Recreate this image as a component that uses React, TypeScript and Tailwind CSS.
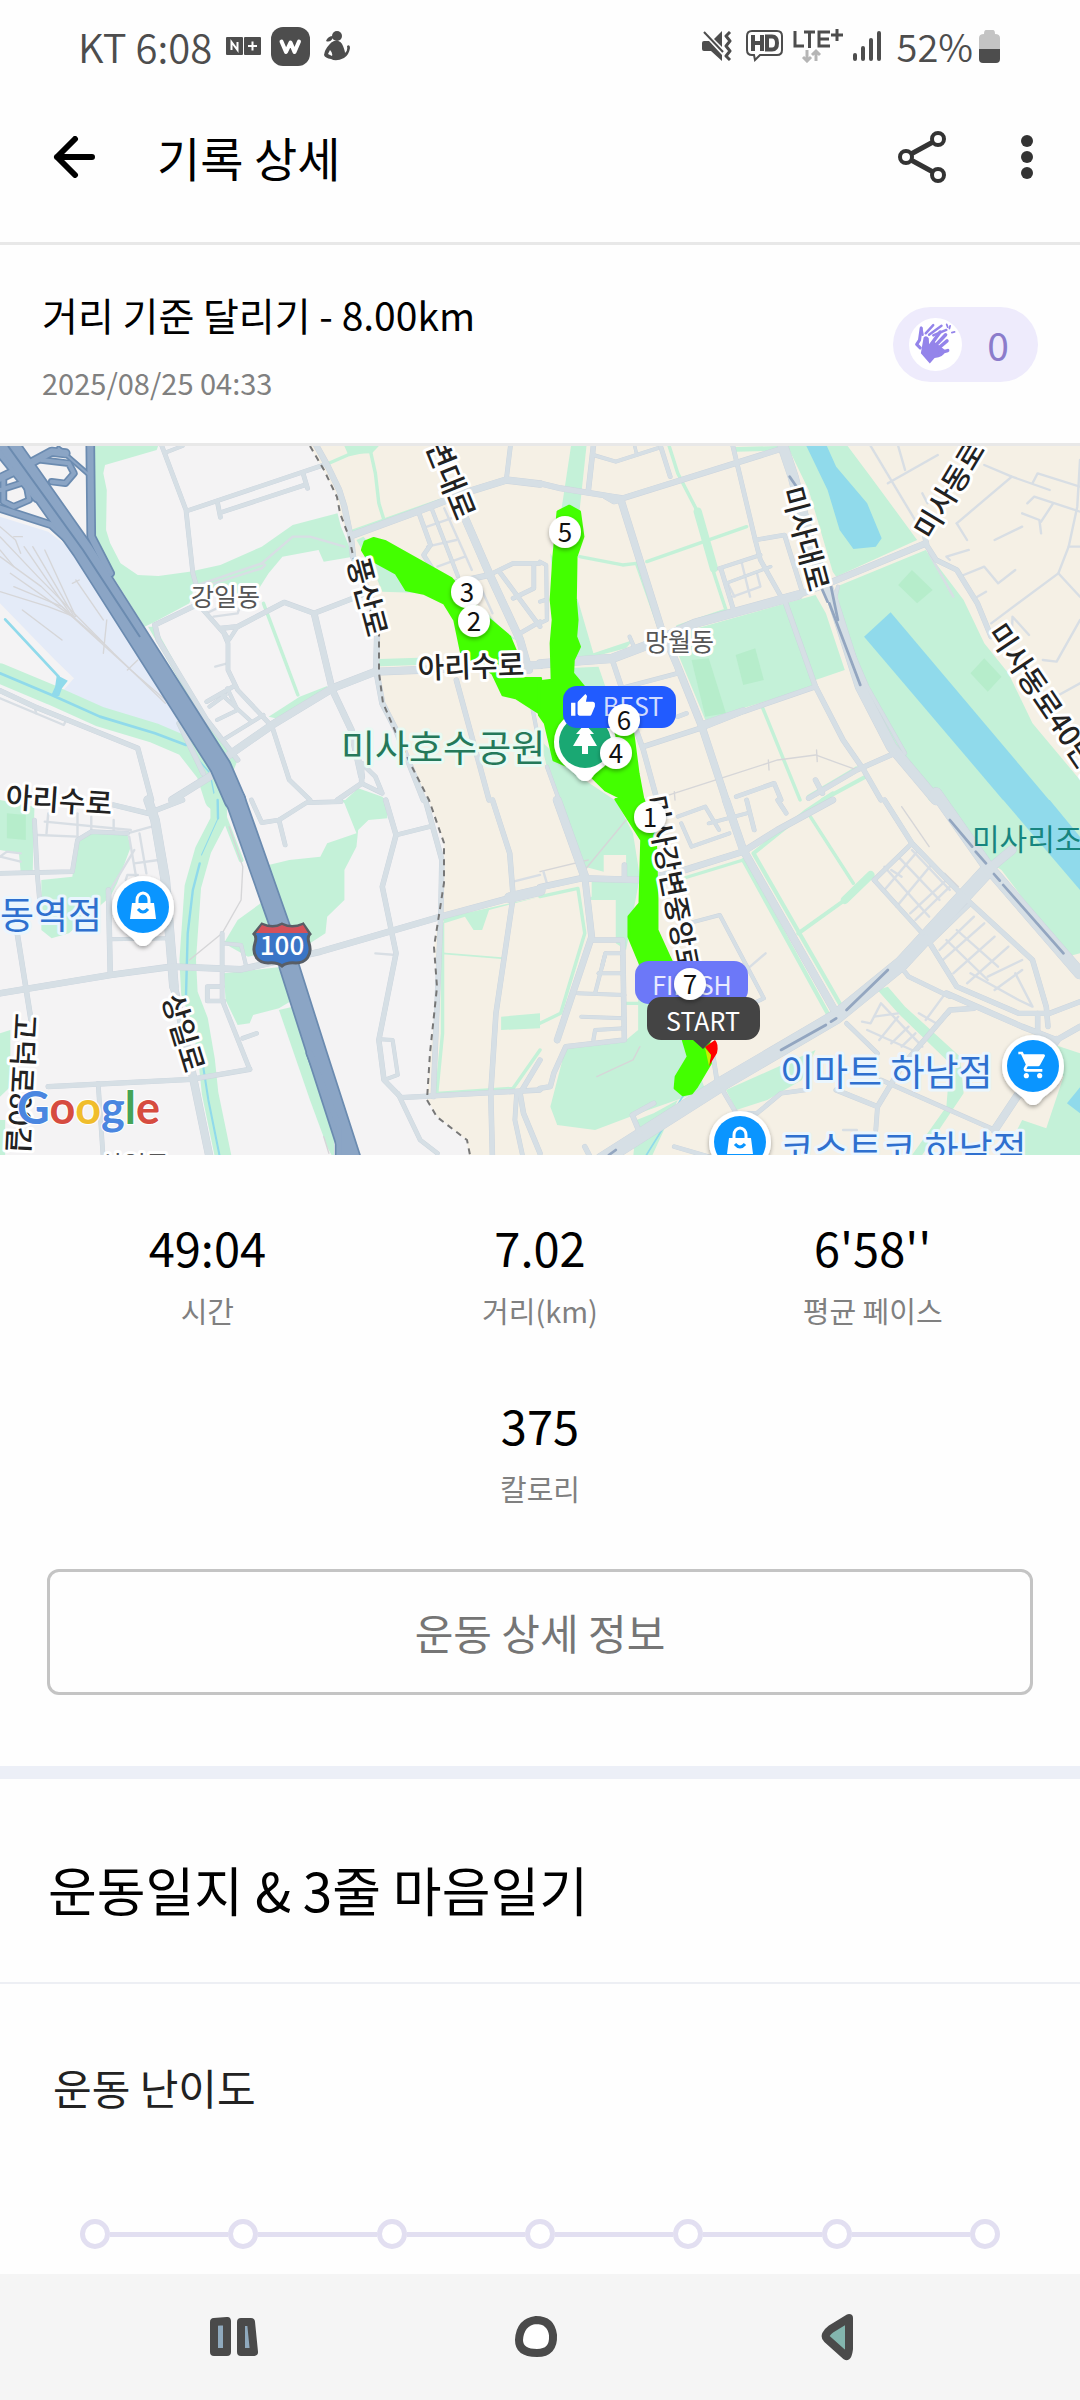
import React, { useState } from "react";
import { MdShoppingCart, MdThumbUp } from "react-icons/md";

type Road = [width: number, d: string];

interface Tile {
  x: number;
  y: number;
  land: string[];
  parks: string[];
  parkLines: Road[];
  groves: string[];
  yards: string[];
  water: string[];
  canals: Road[];
  rails: string[];
  roads: Road[];
  lanes: string[];
  underpass: string[];
  highways: Road[];
  route: string[];
}

const STATS = [
  { label: "시간", value: "49:04" },
  { label: "거리(km)", value: "7.02" },
  { label: "평균 페이스", value: "6'58''" },
  { label: "칼로리", value: "375" },
];

const LEVELS = [1, 2, 3, 4, 5, 6, 7];

// Each tile covers 540x360 of the map and is drawn on its own 1568x1080 grid
const TILES: Tile[] = [
  {
    x: 0, y: 440,
    land: ["900,18 940,90 980,170 985,220 1010,290 1025,350 1060,480 1100,580 1100,700 1110,790 1150,880 1190,970 1245,1082 1570,1082 1570,0 900,0"],
    parks: [
      "275,0 465,0 455,30 305,75 300,100 310,150 308,270 320,310 350,370 400,405 460,408 550,395 640,375 760,320 850,255 980,220 990,260 1010,310 1025,350 940,365 925,330 820,350 780,400 740,465 560,455 550,490 450,545 420,560 310,380 275,290",
      "430,560 450,560 600,840 690,960 675,1000",
      "1035,300 1055,290 1150,390 1240,460 1110,455 1080,380",
      "780,830 870,770 950,738 950,755 800,835",
      "1000,1082 1040,1045 1110,1070 1120,1082",
      "1000,18 1100,18 1080,40 1010,42",
      "1400,500 1450,560 1500,600 1440,580",
    ],
    parkLines: [[60, "0,700 150,765 290,830 450,880 540,920 600,1000 625,1080"], [10, "1075,30 1090,100 1100,190 1115,240"], [10, "955,70 1010,45 1075,30"], [10, "1020,275 1280,180"], [10, "765,490 865,765"], [22, "1105,668 1215,664"], [8, "960,90 1000,190"]],
    groves: [],
    yards: ["0,230 140,275 210,330 340,540 480,770 540,890 400,850 180,755 215,715 160,660 0,490"],
    water: ["165,705 197,722 180,745 172,768 148,768 160,740"],
    canals: [[8, "0,700 150,765 290,830 450,880 540,915"], [8, "15,538 170,710"], [4, "560,940 610,1000 625,1080"]],
    rails: ["0,260 45,300 60,340", "0,290 110,410 330,640 480,790", "0,350 120,440 210,530 380,690 480,780", "40,440 180,500 300,610", "70,320 210,530", "95,320 215,530", "130,330 220,530", "30,400 210,530", "0,455 140,500 215,530", "220,420 300,540", "65,510 180,600", "0,330 40,380", "300,640 310,540", "210,430 230,420", "40,290 65,290", "370,690 400,660"],
    roads: [
      [12, "470,18 540,210 560,400 590,510 650,580 662,610 662,690 690,750 790,860 840,1020 900,1080"], [10, "480,38 530,18"],
      [12, "545,212 940,75"], [12, "632,190 640,232"], [12, "640,218 885,135"], [12, "880,100 893,145"],
      [16, "915,10 950,75 985,150 1000,200 1020,300 1025,350 1080,480 1095,580 1092,690 1110,790 1150,870 1230,1080"],
      [20, "1025,285 1210,215 1360,155 1470,120 1568,132"], [12, "1482,18 1470,120"], [22, "1340,210 1420,400 1510,600 1535,690"],
      [14, "450,555 560,500"], [14, "640,565 690,560 825,487 912,520 1050,465"], [10, "650,575 665,600 690,560"], [14, "450,555 460,600 600,840 690,960"],
      [18, "912,520 965,750 1020,870 1050,1010"], [14, "1050,970 1050,1030 980,1080"], [12, "1050,1030 1110,1060 1090,1010 1060,980"], [22, "665,945 790,855 965,745 1090,695 1568,675"], [14, "1325,720 1420,1080"],
      [12, "600,785 680,738"], [10, "608,800 655,765"], [10, "645,765 730,845"], [10, "630,840 690,810"], [10, "655,895 765,825"], [10, "660,745 690,810"],
      [12, "1215,215 1250,315 1230,345 1270,410"], [10, "1255,210 1330,410"], [12, "1420,405 1490,370 1568,370"], [12, "1450,395 1568,560"], [12, "1510,580 1568,545"], [12, "1550,375 1550,445 1490,475"], [16, "1290,435 1420,405"],
      [14, "0,752 100,800 400,925 440,1080"], [14, "520,850 590,1000"], [22, "500,1080 640,990"], [10, "1545,800 1560,880"],
    ],
    lanes: ["0,775 185,855 190,845", "100,800 105,820", "1290,205 1370,390", "1240,260 1310,235", "1240,320 1325,300", "1270,380 1350,350", "560,440 760,370 770,375 760,385 620,430", "760,370 850,290 900,290 1000,320", "600,520 640,500 695,505 690,520 620,530", "1390,430 1430,520", "625,680 660,670"],
    underpass: [],
    highways: [[28, "262,0 265,290 320,400"], [26, "0,205 150,255 230,330"], [30, "0,115 60,85 150,35 190,40"], [22, "120,60 200,70 215,100 190,130 150,125"], [22, "10,120 10,185 40,200 85,180 75,125 0,150"], [16, "170,25 265,110"], [40, "0,30 110,170"], [66, "15,0 240,330 640,980 682,1080"]],
    route: ["1052,330 1060,305 1085,295 1120,305 1310,415 1400,520 1480,590 1500,640 1510,715 1570,715 1570,822 1500,775 1460,765 1430,700 1340,640 1320,540 1290,490 1230,460 1180,450 1150,400 1065,352"],
  },
  {
    x: 540, y: 440,
    land: ["0,0 1570,0 1570,1082 0,1082"],
    parks: [
      "90,18 135,18 112,240 62,210", "30,340 110,480 155,640 270,600 250,625 155,650 60,650",
      "710,0 880,0 960,110 1095,300 860,410 850,395 780,150",
      "860,440 1120,330 1230,480 1290,610 1360,700 1430,850 1568,1020 1570,1082 1130,1082 1020,890 930,740 880,560",
      "420,575 800,465 830,520 885,690 800,720 790,740 480,840 400,640",
      "70,685 170,680 210,800 100,740", "0,900 100,1000 220,1082 60,1082 20,980",
    ],
    parkLines: [[10, "375,18 400,100 460,220 505,400 540,510 400,560"], [24, "458,215 505,385"], [10, "310,365 600,260"], [10, "115,350 240,375 280,370"], [10, "280,370 345,560"], [10, "645,800 755,1080"], [12, "780,1070 920,985"], [12, "820,1080 945,1010"], [14, "570,28 690,25"]],
    groves: ["1080,390 1140,450 1095,490 1040,435", "1290,655 1340,710 1300,755 1250,700", "568,645 625,625 650,720 590,735", "440,660 490,655 540,820 480,830"],
    yards: [],
    water: ["765,0 825,0 860,80 950,190 992,295 975,320 910,327 870,270 835,150", "1018,517 1480,1082 1346,1082 941,590"],
    canals: [],
    rails: ["360,1070 540,1010 690,960 800,945 920,990", "803,930 805,965", "663,960 665,990", "390,1055 392,1080"],
    roads: [
      [14, "155,18 140,155"], [16, "0,130 60,145 210,170 240,175 690,30"], [14, "235,180 215,185 190,170"], [20, "235,180 250,230 350,560 400,680 470,860 540,1080"], [10, "155,45 220,65 340,25"], [8, "275,18 280,40"],
      [12, "350,18 378,110"], [12, "560,18 625,300 640,360 700,470"], [30, "705,18 735,110 790,330 850,480 930,740 1020,920 1150,1080"], [10, "865,440 850,500 950,740 1060,940"],
      [26, "0,672 120,662 210,655 300,620 450,550 750,465"], [18, "750,465 850,425 1120,310"], [10, "260,590 275,625"], [12, "625,300 710,285 760,450"], [10, "520,385 640,345"], [12, "525,385 562,510"], [8, "540,430 670,380"],
      [14, "210,660 265,830 300,930 340,1080"], [12, "235,745 400,700"], [14, "300,920 480,860 590,815 800,740"], [18, "480,850 590,812"], [14, "710,480 800,740 880,900 940,990 990,1080"],
      [14, "1118,290 1122,315 1150,360 1210,390 1270,490 1310,590"], [14, "780,1075 920,990 1030,940"], [14, "800,1020 820,1060"], [12, "570,1070 680,1030 700,1080"], [10, "0,365 18,375 20,540 0,550"], [10, "0,485 15,480"], [12, "400,830 425,820"], [10, "20,980 55,1080"],
    ],
    lanes: ["1118,290 960,18", "1010,130 1155,45", "1040,18 1060,90", "1290,75 1370,110 1480,150", "1370,110 1210,250", "1430,130 1445,100 1568,140", "1415,190 1435,170 1568,215", "1400,220 1450,240 1455,280", "1320,300 1400,260", "1455,245 1490,190", "1568,60 1560,200 1535,320 1505,400 1310,550", "1535,320 1568,320", "1505,400 1568,470", "1190,360 1180,350 1245,330", "1230,405 1290,380 1330,430 1380,390", "1270,470 1295,455", "1460,660 1500,665 1568,540", "1370,580 1372,530 1420,585", "1480,780 1568,730", "1210,250 1240,300", "1110,160 1125,190", "585,365 610,470", "560,470 640,440 630,400", "545,430 565,470", "1200,470 1130,340"],
    underpass: ["840,490 930,735", "845,440 865,540", "725,110 745,140", "820,450 835,485"],
    highways: [],
    route: ["-2,725 35,720 32,610 38,540 32,480 40,350 52,215 85,198 115,215 125,290 105,350 103,480 108,540 104,590 115,620 97,660 95,700 115,725 220,860 270,880 285,1000 300,1082 250,1082 190,1050 150,1010 40,960 15,850 -2,825"],
  },
  {
    x: 0, y: 800,
    land: ["1245,0 1290,130 1290,250 1260,440 1270,560 1250,760 1240,900 1270,950 1355,1020 1365,1080 1570,1080 1570,0"],
    parks: [
      "0,0 100,20 95,215 60,215 55,160 0,150", "225,130 260,100 370,105 380,140 340,250 320,290 200,400 150,415 120,390 120,240 210,230",
      "780,195 840,180 930,170 950,130 1035,100 1000,10 990,0 1120,0 1125,55 1070,60 1040,90 1035,140 1000,210 1000,300 950,350 945,400 900,430 720,470 650,430 690,360 770,300",
      "650,520 820,500 850,600 810,625 735,645 725,670 690,675 655,600", "810,630 850,620 970,960 970,1080 950,1040 900,900",
      "1285,355 1568,290 1420,330 1400,390 1375,390 1350,350 1290,370", "1455,650 1568,640 1568,685 1455,690", "0,700 30,690 30,860 0,890", "0,960 15,960 15,1080 0,1080",
    ],
    parkLines: [[48, "635,0 635,60 590,150 560,260 545,480 550,580 580,660 600,780 610,880 650,1080"], [10, "1285,370 1285,700 1268,880 1490,865 1568,750"], [5, "1285,460 1465,475"], [14, "640,20 700,180"]],
    groves: ["20,40 75,45 75,120 20,115"],
    yards: [],
    water: [],
    canals: [[7, "632,0 633,55"], [3, "633,55 585,165"], [7, "580,190 560,270 545,400 540,590"], [6, "590,800 605,900 640,1080"]],
    rails: ["665,80 705,200 700,300 645,400 550,480", "940,1010 955,1060"],
    roads: [
      [12, "0,220 210,215 225,120 265,95 370,100"], [12, "100,60 108,220 115,300"], [26, "430,0 450,60 480,240 505,560"], [22, "505,560 560,830 610,1080"], [14, "330,15 430,40 530,0"],
      [18, "0,580 320,525 500,500 700,508 930,455 1280,350 1568,270"], [14, "50,400 90,660"], [14, "315,270 320,520"], [10, "320,418 490,415"], [14, "140,860 555,838 725,808"], [12, "285,850 300,1080"],
      [12, "645,400 645,600 725,808"], [10, "645,430 700,435 715,500"], [12, "645,560 602,560 602,603 650,603"], [12, "705,715 745,700"], [12, "730,0 760,68 810,60 890,8 990,5"], [12, "810,60 828,135"],
      [14, "1120,0 1150,105 1110,260 1150,460 1100,720 1115,840 1165,893 1568,870"], [12, "1150,105 1255,78"], [10, "1105,718 1140,720 1155,825 1120,838"], [12, "1155,880 1220,1020 1270,1060"], [14, "1235,0 1283,180 1280,340 1258,890"],
      [14, "1430,0 1480,160 1490,290 1440,640 1425,880 1430,1080"], [12, "1500,880 1495,960 1520,1080"], [14, "1568,780 1510,880 1520,940 1568,1060"], [30, "1480,293 1568,272"],
    ],
    lanes: ["130,65 380,90", "110,105 225,110", "140,40 135,100", "225,40 225,110", "265,50 265,100", "330,60 330,100", "370,100 440,80", "375,110 395,230", "405,100 425,220", "390,190 460,180", "320,270 390,150", "0,170 20,155 60,160", "0,170 60,185", "365,240 370,225 400,225", "1090,460 1150,465", "1490,245 1568,225"],
    underpass: [],
    highways: [[62, "682,-5 820,400 840,500 920,760 1020,1080"], [26, "900,760 985,980 985,1080"]],
    route: [],
  },
  {
    x: 540, y: 800,
    land: ["0,0 1570,0 1570,1080 0,1080"],
    parks: [
      "60,0 220,0 270,100 290,230 250,450 220,430 220,300 150,300 150,230 250,230 250,165 185,165 185,215 130,200",
      "75,740 250,720 285,690 285,490 420,700 480,870 300,935 160,990 50,975 30,920", "1150,0 1568,0 1568,460 1530,470 1340,210 1310,190",
      "540,870 800,750 760,840 660,900 570,930", "980,570 1010,560 1060,620 1220,770 1230,880 1100,1080 1070,1080 1180,920 1190,790 1040,640",
      "1400,960 1470,985 1520,830 1480,730 1568,760 1568,1080 1390,1080 1380,1000", "280,960 330,940 400,900 320,1080 270,1080",
    ],
    parkLines: [[12, "850,-20 770,35 620,160 870,610"], [12, "590,180 835,640"], [10, "400,240 590,180"], [10, "785,50 910,250"], [24, "960,225 885,300"], [12, "885,300 750,400"], [12, "540,830 835,650"], [10, "0,290 110,265 130,400 60,640 0,670"], [10, "150,295 220,295"], [10, "250,610 290,610"]],
    groves: [],
    yards: [],
    water: ["1345,0 1480,0 1568,110 1568,270", "1530,910 1568,862 1568,940"],
    canals: [[5, "420,880 300,1080"]],
    rails: ["130,210 250,60", "0,215 140,180", "1050,20 1130,140", "1175,220 1215,260", "290,740 270,780 165,830"],
    roads: [
      [24, "50,0 130,230"], [18, "130,230 150,410 50,720"], [18, "0,262 120,235 290,240 420,210 590,155 690,90 850,0"], [22, "540,0 590,150 860,640"],
      [14, "150,420 240,420 245,720 75,740 40,820 30,860 0,865"], [10, "110,580 245,585"], [10, "120,650 245,655"], [10, "155,720 160,690 245,685"], [10, "180,500 190,460 240,460"], [10, "170,520 240,520"], [10, "190,460 160,580"],
      [42, "180,1080 530,850 860,650 1050,490 1300,210"], [26, "1300,210 1370,150"], [34, "1150,-20 1300,200 1568,520"], [14, "1000,0 1080,130 1230,290 1430,480 1470,620 1475,680"], [12, "970,240 1080,130"], [12, "970,240 1110,400"],
      [14, "1120,410 1210,560 1390,640 1480,640 1568,605"], [12, "1040,490 1070,530 1190,590"], [12, "1250,310 1130,430"], [14, "860,870 980,920 1050,800 1190,630 1260,625"], [12, "980,920 975,990"], [12, "890,670 980,760"], [12, "990,840 1320,990"], [22, "1320,990 1410,850 1500,720"],
      [16, "1180,580 1400,680 1500,720 1568,680"], [14, "1445,640 1445,700"], [12, "530,870 570,940 630,940 700,880 770,870"], [12, "500,750 515,850"], [14, "290,1000 268,945 330,910"], [14, "130,1040 150,1080"], [12, "390,1040 490,1070"],
      [10, "410,70 440,140 550,100"], [10, "400,50 480,20 520,90"], [10, "490,70 600,40"], [12, "600,0 622,90"], [12, "690,0 715,40"], [10, "430,370 522,345 650,595 600,620"], [14, "245,195 245,235"],
    ],
    lanes: ["610,500 655,460", "1000,200 1130,350", "1040,170 1160,300", "1080,150 1190,270", "1000,270 1095,155", "1035,320 1140,190", "1075,340 1180,240", "1090,360 1190,260", "1020,210 1050,230", "1160,450 1260,350", "1170,480 1290,370", "1200,520 1320,410", "1240,550 1360,440", "1180,420 1300,540", "1210,390 1330,500", "1250,520 1390,600 1430,620 1380,520", "1300,530 1400,480", "1320,570 1400,510", "935,665 960,670 990,610 1110,740", "950,690 1080,750", "970,650 1040,640", "985,720 1040,650", "1020,730 1070,680", "1050,740 1090,700", "1100,640 1150,670 1190,640", "1120,660 1170,590", "880,990 920,990", "10,215 20,250"],
    underpass: ["700,750 830,675", "845,665 860,655", "890,630 1010,510", "1190,60 1255,140", "1265,155 1295,190", "1318,222 1335,242", "1345,255 1520,460", "200,1065 220,1050"],
    highways: [],
    route: ["220,-2 300,-2 335,100 340,300 340,390 375,470 480,700 497,745 495,790 455,860 440,880 415,885 392,865 395,830 430,770 410,700 290,490 258,410 258,350 290,310 295,120"],
  },
];

const STREETS = [
  { text: "변대로", x: 450, y: 480, angle: 68, size: 30 },
  { text: "풍산로", x: 367, y: 597, angle: 75, size: 29 },
  { text: "아리수로", x: 471, y: 667, angle: -2, size: 29 },
  { text: "아리수로", x: 59, y: 801, angle: 4, size: 29 },
  { text: "미사대로", x: 805, y: 539, angle: 75, size: 29 },
  { text: "미사동로", x: 950, y: 490, angle: -59, size: 29 },
  { text: "미사동로40번길", x: 1049, y: 707, angle: 56, size: 29 },
  { text: "미사강변중앙로", x: 672, y: 884, angle: 79, size: 28 },
  { text: "상일로", x: 183, y: 1033, angle: 73, size: 29 },
  { text: "고덕로80길", x: 21, y: 1083, angle: 93, size: 29 },
];

const PLACES = [
  { text: "강일동", x: 191, y: 606, size: 25, color: "#555555", halo: "#ffffff" },
  { text: "망월동", x: 645, y: 651, size: 25, color: "#555555", halo: "#ffffff" },
  { text: "미사호수공원", x: 341, y: 762, size: 37, color: "#25795a", halo: "#e9faf3" },
  { text: "동역점", x: 0, y: 929, size: 37, color: "#2f70cf", halo: "#eaf6fe" },
  { text: "이마트 하남점", x: 780, y: 1086, size: 37, color: "#2f70cf", halo: "#eaf6fe" },
  { text: "코스트코 하남점", x: 780, y: 1163, size: 37, color: "#2f70cf", halo: "#eaf6fe" },
  { text: "미사리조정경기장", x: 972, y: 850, size: 30, color: "#17857f", halo: "none" },
  { text: "상일동", x: 100, y: 1174, size: 25, color: "#555555", halo: "#ffffff" },
];

const KM_MARKS = [
  { km: 3, x: 467, y: 592 },
  { km: 2, x: 474, y: 621 },
  { km: 5, x: 565, y: 532 },
  { km: 4, x: 616, y: 753 },
  { km: 1, x: 650, y: 817 },
  { km: 6, x: 624, y: 720 },
];

function tileLayer(render: (t: Tile) => React.ReactNode) {
  return TILES.map((t) => (
    <g key={`${t.x}-${t.y}`} transform={`translate(${t.x} ${t.y}) scale(0.3444 0.3333)`}>{render(t)}</g>
  ));
}

const polys = (list: string[], fill: string) => list.map((p) => <polygon key={p} points={p} fill={fill} />);

const lines = (list: Road[], stroke: string, extra = 0) =>
  list.map(([w, p]) => (
    <polyline key={p} points={p} fill="none" stroke={stroke} strokeWidth={w + extra} strokeLinejoin="round" strokeLinecap="round" />
  ));

function Pin({ x, y, color, children }: { x: number; y: number; color: string; children: React.ReactNode }) {
  return (
    <g transform={`translate(${x} ${y})`}>
      <g filter="url(#pinShadow)">
        <path d="M0 39C-4 39-6 37-9 33C-14 27-31 20-31 0A31 31 0 0 1 31 0C31 20 14 27 9 33C6 37 4 39 0 39Z" fill="#fff" />
      </g>
      <circle r="26" fill={color} />
      {children}
    </g>
  );
}

function Bag() {
  return (
    <g>
      <path d="M-11-4H11L13 12H-13Z" fill="#fff" />
      <path d="M-6-3V-7A6 7 0 0 1 6-7V-3" fill="none" stroke="#fff" strokeWidth="3" />
      <path d="M-5 2Q0 8 5 2" fill="none" stroke="#0a95ff" strokeWidth="3" />
    </g>
  );
}

function KmMark({ km, x, y }: { km: number; x: number; y: number }) {
  return (
    <g>
      <circle cx={x} cy={y} r="16" fill="#fff" filter="url(#pinShadow)" />
      <text x={x} y={y + 10} fontSize="26" textAnchor="middle" fill="#111">{km}</text>
    </g>
  );
}

function RouteMap() {
  return (
    <svg viewBox="0 446 1080 709" className="block w-full bg-[#f4f3f4]" role="img" aria-label="달리기 경로 지도">
      <defs>
        <filter id="pinShadow" x="-30%" y="-30%" width="160%" height="170%">
          <feDropShadow dx="0" dy="2" stdDeviation="2" floodOpacity="0.35" />
        </filter>
      </defs>

      {tileLayer((t) => polys(t.land, "#f5f0e5"))}
      {tileLayer((t) => (
        <>
          {polys(t.yards, "#e4ebf8")}
          {polys(t.parks, "#c4f1d8")}
          {lines(t.parkLines, "#c4f1d8")}
          {polys(t.groves, "#b6edcb")}
          {polys(t.water, "#90daeb")}
          {lines(t.canals, "#90daeb")}
          {lines(t.rails.map((p): Road => [4, p]), "#d6d6d8")}
        </>
      ))}
      {tileLayer((t) => lines(t.lanes.map((p): Road => [7, p]), "#d8dee4"))}
      {tileLayer((t) => lines(t.roads, "#cbd4dd", 2))}
      {tileLayer((t) => lines(t.roads, "#d6dfe5"))}
      {tileLayer((t) => lines(t.underpass.map((p): Road => [8, p]), "#93a6c0"))}

      {/* 시 경계선 */}
      <path d="M310 446L324 470L337 497L340 513L349 537L354 560L366 600L379 633L379 673L383 703L396 733L410 763L429 800L444 843L444 883L434 947L437 987L430 1053L427 1100L437 1117L467 1140L470 1155" fill="none" stroke="#777" strokeWidth="2" strokeDasharray="6 5" />

      {tileLayer((t) => lines(t.highways, "#6b8bb0"))}
      {tileLayer((t) => lines(t.highways, "#8ba5c5", -10))}
      <path d="M8 446L83 550L140 637" fill="none" stroke="#6b8bb0" strokeWidth="2" />

      {/* 도로 표지 */}
      <path d="M262 924Q273 929 282 924Q292 929 303 924L310 934Q307 937 309 943C313 956 305 963 296 963Q287 962 282 966Q277 962 268 963C259 963 251 956 255 943Q257 937 254 934Z" fill="#3a75c6" stroke="#585e66" strokeWidth="3" />
      <path d="M262 925Q273 930 282 925Q292 930 303 925L308 933H256Z" fill="#d4515a" />
      <text x="282" y="955" fontSize="26" fontWeight="500" textAnchor="middle" fill="#fff">100</text>

      {tileLayer((t) => (
        <g stroke="#43ff00" strokeWidth="8" strokeLinejoin="round">{polys(t.route, "#43ff00")}</g>
      ))}
      <path d="M705 1047L715 1040Q719 1044 717 1053L709 1066L711 1055Z" fill="#ff0000" />
      <path d="M705 1048L711 1055L709 1066Z" fill="#c8f000" />

      {STREETS.map((s) => (
        <text
          key={s.text + s.x}
          transform={`translate(${s.x} ${s.y}) rotate(${s.angle})`}
          y="10"
          fontSize={s.size}
          fontWeight="500"
          textAnchor="middle"
          fill="#222"
          stroke="#fff"
          strokeWidth="6"
          strokeLinejoin="round"
          paintOrder="stroke"
        >
          {s.text}
        </text>
      ))}
      {PLACES.map((p) => (
        <text key={p.text} x={p.x} y={p.y} fontSize={p.size} fill={p.color} stroke={p.halo} strokeWidth="6" strokeLinejoin="round" paintOrder="stroke">
          {p.text}
        </text>
      ))}

      <Pin x={585} y={742} color="#1aa873">
        <path d="M0-18L9-8H5L12 4H3V12H-3V4H-12L-5-8H-9Z" fill="#fff" />
      </Pin>
      <Pin x={143} y={907} color="#0a95ff"><Bag /></Pin>
      <Pin x={740} y={1142} color="#0a95ff"><Bag /></Pin>
      <Pin x={1033} y={1066} color="#0a95ff">
        <MdShoppingCart x={-16} y={-17} size={32} color="#fff" />
      </Pin>

      <rect x="563" y="686" width="113" height="42" rx="14" fill="#215bff" />
      <MdThumbUp x={570} y={693} size={26} color="#fff" />
      <text x="633" y="716" fontSize="25" textAnchor="middle" fill="#d0dbff">BEST</text>
      {KM_MARKS.map((m) => <KmMark key={m.km} {...m} />)}

      <rect x="635" y="961" width="113" height="43" rx="14" fill="#6c78f8" />
      <text x="692" y="995" fontSize="25" textAnchor="middle" fill="#e8eaff">FINISH</text>
      <path d="M661 997H746A14 14 0 0 1 760 1011V1026A14 14 0 0 1 746 1040H712L703 1049L693 1040H661A14 14 0 0 1 647 1026V1011A14 14 0 0 1 661 997Z" fill="#444" />
      <text x="703" y="1031" fontSize="25" textAnchor="middle" fill="#fff">START</text>
      <KmMark km={7} x={690} y={984} />

      <text x="17" y="1124" fontSize="45" fontWeight="700" className="font-['Lato',sans-serif]" stroke="#fff" strokeWidth="2" paintOrder="stroke">
        <tspan fill="#4a86e0">G</tspan>
        <tspan fill="#d64c40">o</tspan>
        <tspan fill="#f0bd2c">o</tspan>
        <tspan fill="#4a86e0">g</tspan>
        <tspan fill="#45a457">l</tspan>
        <tspan fill="#d64c40">e</tspan>
      </text>
    </svg>
  );
}

function StatusBar() {
  return (
    <div className="flex h-[72px] items-center justify-between pt-5 pr-20 pl-[78px] leading-[52px] text-[#4d4d4d]">
      <div className="flex items-center">
        <span className="text-[40px] font-[350]">KT 6:08</span>
        <svg width="35" height="18" viewBox="0 0 35 18" className="ml-[14px]">
          <rect width="17" height="18" rx="1" fill="#4d4d4d" />
          <rect x="18" width="17" height="18" rx="1" fill="#4d4d4d" />
          <path d="M5.500 13V5L11.500 13V5M22 9H31M26.500 4.500V13.500" fill="none" stroke="#fff" strokeWidth="2" />
        </svg>
        <svg width="39" height="39" viewBox="0 0 39 39" className="ml-[10px]">
          <rect width="39" height="39" rx="12" fill="#4d4d4d" />
          <path d="M10.500 14.500L15 25L19.500 15.500L23.500 25L28 14.500" fill="none" stroke="#fff" strokeWidth="4" strokeLinecap="round" strokeLinejoin="round" />
        </svg>
        <svg width="26" height="30" viewBox="0 0 26 30" className="ml-[14px]" fill="#4d4d4d">
          <circle cx="13" cy="5" r="5" />
          <path d="M9 5Q4 5 2 10Q6 12 9 7Z" />
          <path fillRule="evenodd" d="M10 10Q17 9 19 15Q21 20 21 22Q24 20 23 15Q26 13 26 17Q25 24 20 27Q12 31 7 28Q1 27 0 24Q1 18 5 14Q7 11 10 10ZM6 19L4 23L8 25Q9 22 6 19Z" />
        </svg>
      </div>
      <div className="flex items-center">
        <svg width="30" height="30" viewBox="0 0 30 30">
          <path d="M0 12Q0 10 2 10H7L20 24V30L9 20H2Q0 20 0 18ZM12 8L20 0V16Z" fill="#4d4d4d" />
          <path d="M2 1L21 21" stroke="#4d4d4d" strokeWidth="2" />
          <path d="M28 1L24 5L28 10L24 15L28 20L24 25L28 29" fill="none" stroke="#4d4d4d" strokeWidth="3" strokeLinejoin="round" />
        </svg>
        <svg width="37" height="32" viewBox="0 0 37 32" className="ml-[14px]">
          <path d="M6 1H31Q36 1 36 6V20Q36 25 31 25H14L9 30L8 25H6Q1 25 1 20V6Q1 1 6 1Z" fill="none" stroke="#4d4d4d" strokeWidth="2" />
          <path d="M7 5V21M16 5V21M7 13H16M21 6.500H26Q31 6.500 31 13T26 19.500H21Z" fill="none" stroke="#4d4d4d" strokeWidth="4" />
        </svg>
        <svg width="50" height="34" viewBox="0 0 50 34" className="ml-[10px]">
          <path d="M2 2V17H11M11 3H22M16.500 3V19M37 3H26V17H37M26 10H36M44 0V12M38 6H50" fill="none" stroke="#4d4d4d" strokeWidth="3" />
          <path d="M14 21V31M10 28L14 32L18 28M23 32V22M19 26L23 22L27 26" fill="none" stroke="#b5b5b5" strokeWidth="3" />
        </svg>
        <svg width="28" height="30" viewBox="0 0 28 30" className="ml-[10px]">
          <path d="M2 24V28M10 17V28M18 9V28M26 2V28" stroke="#4d4d4d" strokeWidth="4" strokeLinecap="round" />
        </svg>
        <span className="ml-4 text-[38px] font-[350]">52%</span>
        <svg width="21" height="33" viewBox="0 0 21 33" className="ml-[6px]">
          <path d="M7 0H14Q16 0 16 4Q21 4 21 8V19H0V8Q0 4 5 4Q5 0 7 0Z" fill="#c4c4c4" />
          <path d="M0 19H21V29Q21 33 17 33H4Q0 33 0 29Z" fill="#4d4d4d" />
        </svg>
      </div>
    </div>
  );
}

function ClapIcon() {
  return (
    <svg width="42" height="42" viewBox="0 0 120 122" fill="none" stroke="#9484ea" strokeLinecap="round" strokeLinejoin="round">
      <path d="M17 15L12 50L4 62L14 72" strokeWidth="9" />
      <path d="M17 14L21 34" strokeWidth="7" />
      <path d="M30 30L52 6M40 34L76 8M52 36L90 20" strokeWidth="7" />
      <path d="M24 42Q32 34 39 44L40 62L52 52L88 80Q82 100 56 102L42 118L16 88Z" fill="#9484ea" stroke="none" />
      <path d="M46 62L72 26M56 68L88 34M66 74L92 52M72 86L94 80" strokeWidth="10" />
      <path d="M91 4L94 12M101 8L99 16M114 26L106 28" strokeWidth="5" />
    </svg>
  );
}

export default function App() {
  const [level, setLevel] = useState<number | null>(null);

  return (
    <div className="flex min-h-screen flex-col bg-[#fefefe] font-['Noto_Sans_CJK_KR',sans-serif] text-black">
      <StatusBar />

      <header className="flex h-[173px] items-center justify-between border-b-3 border-[#e8e8e8] pr-[47px] pl-[53px]">
        <div className="flex items-center gap-[62px]">
          <button type="button" aria-label="뒤로">
            <svg width="42" height="42" viewBox="0 0 42 42" fill="none" stroke="#000" strokeWidth="6" strokeLinecap="round" strokeLinejoin="round">
              <path d="M22 3L4 21L22 39M4 21H39" />
            </svg>
          </button>
          <h1 className="text-[47px] leading-[64px]">기록 상세</h1>
        </div>
        <div className="flex items-center gap-[75px]">
          <button type="button" aria-label="공유">
            <svg width="48" height="52" viewBox="0 0 48 52" fill="none" stroke="#333" strokeWidth="4">
              <circle cx="8" cy="26" r="6" />
              <circle cx="40" cy="8" r="6" />
              <circle cx="40" cy="44" r="6" />
              <path d="M13 23L35 11M13 29L35 41" strokeWidth="5" />
            </svg>
          </button>
          <button type="button" aria-label="더보기">
            <svg width="12" height="44" viewBox="0 0 12 44" fill="#333">
              <circle cx="6" cy="6" r="6" />
              <circle cx="6" cy="22" r="6" />
              <circle cx="6" cy="38" r="6" />
            </svg>
          </button>
        </div>
      </header>

      <section className="flex h-[201px] items-center justify-between border-b-3 border-[#e8e8e8] px-[42px]">
        <div>
          <h2 className="text-[39px] leading-[56px]">거리 기준 달리기 - 8.00km</h2>
          <p className="mt-5 text-[29px] leading-[40px] text-[#808080]">2025/08/25 04:33</p>
        </div>
        <button type="button" aria-label="박수" className="flex h-[75px] w-[145px] items-center rounded-full bg-[#eeebfc] pl-4">
          <span className="flex size-[53px] items-center justify-center rounded-full bg-white"><ClapIcon /></span>
          <span className="flex-1 pr-1 text-center text-[39px] leading-[52px] text-[#8b7ccb]">0</span>
        </button>
      </section>

      <RouteMap />

      <section className="px-[41px] pt-[60px] pb-[71px]">
        <dl className="flex flex-wrap justify-center gap-y-[61px]">
          {STATS.map((s) => (
            <div key={s.label} className="flex w-1/3 flex-col-reverse items-center gap-[9px]">
              <dt className="text-[29px] leading-[44px] text-[#808080]">{s.label}</dt>
              <dd className="text-[47px] leading-[64px]">{s.value}</dd>
            </div>
          ))}
        </dl>
        <div className="mt-[59px] px-[6px]">
          <button type="button" className="h-[126px] w-full rounded-xl border-3 border-[#c4c4c4] text-[42px] leading-[60px] text-[#757575]">
            운동 상세 정보
          </button>
        </div>
      </section>

      <section className="border-t-[13px] border-[#eceff7]">
        <h2 className="border-b-2 border-[#edeff4] px-12 pt-[70px] pb-[53px] text-[53px] leading-[80px]">운동일지 &amp; 3줄 마음일기</h2>
        <h3 id="level-title" className="px-[53px] pt-[73px] text-[42px] leading-[60px] text-[#222]">운동 난이도</h3>
        <div role="radiogroup" aria-labelledby="level-title" className="mt-[102px] flex items-center px-20 pb-[25px]">
          {LEVELS.map((n) => (
            <React.Fragment key={n}>
              {n > 1 && <span className="h-[5px] flex-1 bg-[#e2dff1]" />}
              <input
                type="radio"
                name="level"
                aria-label={`난이도 ${n}`}
                checked={level === n}
                onChange={() => setLevel(n)}
                className="size-[30px] flex-shrink-0 appearance-none rounded-full border-5 border-[#e2dff1] bg-white checked:bg-[#9484ea]"
              />
            </React.Fragment>
          ))}
        </div>
      </section>

      <nav className="mt-auto grid h-[126px] grid-cols-3 items-center justify-items-center bg-[#f5f5f5] pr-[91px] pl-[83px]">
        <button type="button" aria-label="최근 앱">
          <svg width="50" height="40" viewBox="0 0 50 40" fill="#8fa9bd" stroke="#4a4a4a" strokeWidth="8" strokeLinejoin="round">
            <path d="M5 5L18 4V35L5 35Z" />
            <path d="M32 5H42L45 35H32Z" />
          </svg>
        </button>
        <button type="button" aria-label="홈">
          <svg width="44" height="44" viewBox="0 0 44 44" fill="#fff" stroke="#4a4a4a" strokeWidth="8">
            <path d="M22 5Q37 5 39 20Q40 38 23 38Q5 38 5 25Q6 7 22 5Z" />
          </svg>
        </button>
        <button type="button" aria-label="이전">
          <svg width="34" height="48" viewBox="0 0 34 48" fill="#83b5ae" stroke="#4a4a4a" strokeWidth="8" strokeLinejoin="round">
            <path d="M28 5L10 16Q2 22 6 26L25 43Q27 44 28 36Z" />
          </svg>
        </button>
      </nav>
    </div>
  );
}
